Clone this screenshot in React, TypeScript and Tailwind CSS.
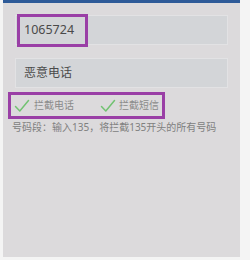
import React from 'react'

const Check = () => (
  <svg width="16" height="14" viewBox="0 0 16 14" className="shrink-0">
    <path d="M1.5 7.5 L5.8 12 L14.5 1.5" fill="none" stroke="#72c272" strokeWidth="1.5" strokeLinecap="round" strokeLinejoin="round" />
  </svg>
)

const App = () => {
  return (
    <div className="w-[250px] h-[260px] bg-[#f4f4f4] flex" style={{ fontFamily: '"Noto Sans", "Noto Sans CJK SC", sans-serif' }}>
      <div className="ml-[3px] w-[237px] h-[257px] bg-[#dcdadc] flex flex-col">
        {/* top bar */}
        <div className="h-[3px] bg-[#2e5a98]" />

        {/* number input */}
        <div className="relative mt-[12px] mx-[12px] h-[30px] bg-[#d3d5d8] border border-[#e2e2e4] flex items-center pl-[8px] text-[12.5px] text-[#4a4a4a]">
          1065724
          <div className="absolute left-[1px] top-[-2px] w-[71px] h-[33px] border-[3px] border-[#9a3fa6]" />
        </div>

        {/* name input */}
        <div className="mt-[13px] mx-[12px] h-[30px] bg-[#d3d5d8] border border-[#e2e2e4] flex items-center pl-[8px] text-[12px] text-[#4a4a4a]">
          恶意电话
        </div>

        {/* options */}
        <div className="mt-[4px] ml-[5px] w-[157px] h-[27px] border-[3px] border-[#9a3fa6] flex items-center pl-[3px] text-[10px] text-[#8a8a8a]">
          <div className="flex items-center gap-[4px] w-[86px]">
            <Check />
            <span>拦截电话</span>
          </div>
          <div className="flex items-center gap-[3px]">
            <Check />
            <span>拦截短信</span>
          </div>
        </div>

        <div className="mt-[1px] ml-[9px] text-[10px] leading-[14px] text-[#808080] whitespace-nowrap">
          号码段：输入135，将拦截135开头的所有号码
        </div>
      </div>
    </div>
  )
}

export default App
